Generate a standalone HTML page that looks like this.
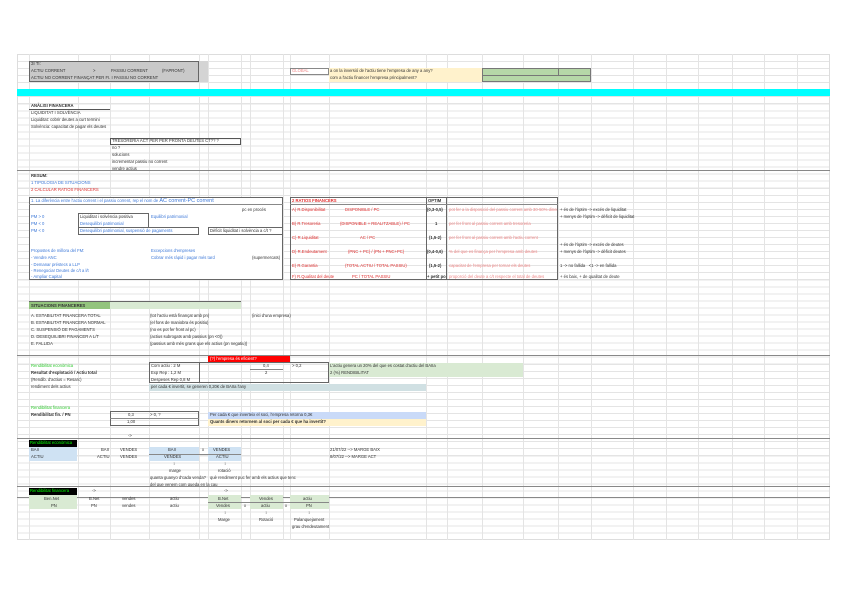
<!DOCTYPE html>
<html><head><meta charset="utf-8"><style>
*{margin:0;padding:0;box-sizing:border-box}
body{width:848px;height:599px;background:#fff;position:relative;overflow:hidden;font-family:"Liberation Sans",sans-serif;font-size:4.2px;color:#333}
.grid{position:absolute;left:17px;top:54px;width:813px;height:486px;border:1px solid #ddd;
background-image:repeating-linear-gradient(to bottom,transparent 0,transparent 6px,#e4e4e4 6px,#e4e4e4 7.04px)}
.v{position:absolute;top:54px;height:486px;width:1px;background:#e4e4e4}
.t{position:absolute;white-space:nowrap;line-height:6px}
.b{position:absolute}
.bd{font-weight:bold}
.blue{color:#3c78d8}.red{color:#e03030}.lred{color:#e88}.grn{color:#3c3}
.h{position:absolute;height:1px;background:#888}
.clip{overflow:hidden;width:108px}
</style></head><body>
<div class="grid"></div>
<div class="v" style="left:29px"></div><div class="v" style="left:78px"></div><div class="v" style="left:110px"></div>
<div class="v" style="left:149px"></div><div class="v" style="left:199px"></div><div class="v" style="left:208px"></div>
<div class="v" style="left:241px"></div><div class="v" style="left:250px"></div><div class="v" style="left:283px"></div>
<div class="v" style="left:290px"></div><div class="v" style="left:329px"></div><div class="v" style="left:426px"></div>
<div class="v" style="left:447px"></div><div class="v" style="left:482px"></div><div class="v" style="left:523px"></div>
<div class="v" style="left:558px"></div><div class="v" style="left:591px"></div><div class="v" style="left:633px"></div>
<div class="v" style="left:666px"></div><div class="v" style="left:698px"></div><div class="v" style="left:732px"></div>
<div class="v" style="left:764px"></div><div class="v" style="left:797px"></div>

<!-- top grey box -->
<div class="b" style="left:199px;top:61px;width:9px;height:21px;background:#d4d4d4"></div>
<div class="b" style="left:29px;top:61px;width:170px;height:21px;background:#c9c9c9;border:1px solid #666"></div>
<div class="t" style="left:31px;top:61px">ЗІ ТІ:</div>
<div class="t" style="left:31px;top:68px">ACTIU CORRENT</div><div class="t" style="left:93px;top:68px">&gt;</div>
<div class="t" style="left:111px;top:68px">PASSIU CORRENT</div><div class="t" style="left:162px;top:68px">(FAPRONT)</div>
<div class="t" style="left:31px;top:75px">ACTIU NO CORRENT FINANÇAT PER FI. I PASSIU NO CORRENT</div>
<div class="b" style="left:290px;top:68px;width:39px;height:7px;border:1px solid #888"></div>
<div class="t lred" style="left:292px;top:68px">GLOBAL</div>
<div class="b" style="left:329px;top:68px;width:153px;height:14px;background:#fff2cc"></div>
<div class="t" style="left:330px;top:68px">a on la inversió de l'actiu tiene l'empresa de any a any?</div>
<div class="t" style="left:330px;top:75px">com a l'actiu financer l'empresa principalment?</div>
<div class="b" style="left:482px;top:68px;width:109px;height:14px;background:#b6d7a8;border:1px solid #777"></div>
<div class="h" style="left:482px;top:75px;width:109px;background:#777"></div>
<div class="b" style="left:558px;top:68px;width:1px;height:7px;background:#777"></div>

<div class="b" style="left:17px;top:89px;width:813px;height:7px;background:#00ffff"></div>

<div class="t bd" style="left:31px;top:103px">ANÀLISI FINANCERA</div>
<div class="h" style="left:29px;top:109px;width:81px;background:#555"></div>
<div class="t" style="left:31px;top:110px">LIQUIDITAT I SOLVÈNCIA</div>
<div class="t" style="left:31px;top:117px">Liquiditat: cobrir deutes a curt termini</div>
<div class="t" style="left:31px;top:124px">Solvència: capacitat de pagar els deutes</div>
<div class="b" style="left:110px;top:138px;width:131px;height:7px;border:1px solid #555"></div>
<div class="t" style="left:112px;top:138px">TRESORERIA ACT PER PER PRONTA DEUTES CT?? ?</div>
<div class="t" style="left:112px;top:145px">no ?</div>
<div class="t" style="left:112px;top:152px">solucions</div>
<div class="t" style="left:112px;top:159px">incrementar passiu no corrent</div>
<div class="t" style="left:112px;top:166px">vendre actius</div>
<div class="h" style="left:17px;top:170px;width:813px"></div>
<div class="t bd" style="left:31px;top:173px">RESUM:</div>
<div class="t blue" style="left:31px;top:180px">1 TIPOLOGIA DE SITUACIONS</div>
<div class="t red" style="left:31px;top:187px">2 CALCULAR RATIOS FINANCERS</div>

<!-- left box -->
<div class="b" style="left:29px;top:197px;width:254px;height:83px;border:1px solid #666;background:#fff"></div>
<div class="h" style="left:29px;top:204px;width:254px"></div>
<div class="t blue" style="left:31px;top:198px">1. La diferència entre l'actiu corrent i el passiu corrent, rep el nom de <span style="font-size:5.5px">AC corrent-PC corrent</span></div>
<div class="t" style="left:242px;top:207px">pc en procés</div>
<div class="t blue" style="left:31px;top:214px">PM &gt; 0</div><div class="t blue" style="left:31px;top:221px">PM &lt; 0</div><div class="t blue" style="left:31px;top:228px">PM &lt; 0</div>
<div class="b" style="left:78px;top:213px;width:71px;height:15px;border:1px solid #666"></div>
<div class="b" style="left:78px;top:227px;width:121px;height:8px;border:1px solid #666"></div>
<div class="b" style="left:208px;top:227px;width:75px;height:8px;border:1px solid #666"></div>
<div class="t" style="left:80px;top:214px">Liquiditat i solvència positiva</div>
<div class="t blue" style="left:151px;top:214px">Equilibri patrimonial</div>
<div class="t blue" style="left:80px;top:221px">Desequilibri patrimonial</div>
<div class="t blue" style="left:80px;top:228px">Desequilibri patrimonial, suspensió de pagaments</div>
<div class="t" style="left:210px;top:228px">Dèficit liquiditat i solvència a c/t ?</div>
<div class="t blue" style="left:31px;top:248px">Propostes de millora del FM:</div>
<div class="t blue" style="left:151px;top:248px">Excepcions d'empreses</div>
<div class="t blue" style="left:31px;top:255px">- Vendre ANC</div>
<div class="t blue" style="left:151px;top:255px">Cobrar més ràpid i pagar més tard</div>
<div class="t" style="left:252px;top:255px">(supermercats)</div>
<div class="t blue" style="left:31px;top:262px">- Demanar préstecs a LLP</div>
<div class="t blue" style="left:31px;top:268px">- Renegociar Deutes de c/t a l/t</div>
<div class="t blue" style="left:31px;top:274px">- Ampliar Capital</div>

<!-- ratios box -->
<div class="b" style="left:290px;top:197px;width:268px;height:83px;border:1px solid #666"></div>
<div class="b" style="left:426px;top:197px;width:21px;height:83px;border-left:1px solid #666;border-right:1px solid #666"></div>
<div class="h" style="left:290px;top:204px;width:268px"></div>
<div class="t red bd" style="left:292px;top:198px">2 RATIOS FINANCERS</div>
<div class="t bd" style="left:428px;top:198px">OPTIM</div>
<div class="t red" style="left:292px;top:207px">A) R.Disponibilitat</div><div class="t red" style="left:345px;top:207px">DISPONIBLE / PC</div><div class="t bd" style="left:427px;top:207px">(0,3-0,5)</div><div class="t lred clip" style="left:449px;top:207px">pot fer a la disposició del passiu corrent amb 30-50% diner</div>
<div class="t red" style="left:292px;top:221px">B) R.Tresoreria</div><div class="t red" style="left:340px;top:221px">(DISPONIBLE + REALITZABLE) / PC</div><div class="t bd" style="left:435px;top:221px">1</div><div class="t lred clip" style="left:449px;top:221px">per fer front al passiu corrent amb tresoreria</div>
<div class="t red" style="left:292px;top:235px">C) R.Liquiditat</div><div class="t red" style="left:360px;top:235px">AC / PC</div><div class="t bd" style="left:429px;top:235px">(1,5-2)</div><div class="t lred clip" style="left:449px;top:235px">per fer front al passiu corrent amb l'actiu corrent</div>
<div class="t red" style="left:292px;top:249px">D) R.Endeutament</div><div class="t red" style="left:348px;top:249px">(PNC + PC) / (PN + PNC+PC)</div><div class="t bd" style="left:427px;top:249px">(0,4-0,6)</div><div class="t lred clip" style="left:449px;top:249px">% del que es finança per l'empresa amb deutes</div>
<div class="t red" style="left:292px;top:263px">E) R.Garantia</div><div class="t red" style="left:345px;top:263px">(TOTAL ACTIU / TOTAL PASSIU)</div><div class="t bd" style="left:429px;top:263px">(1,5-2)</div><div class="t lred clip" style="left:449px;top:263px">capacitat de l'empresa per tornar els deutes</div>
<div class="t red" style="left:292px;top:274px">F) R.Qualitat del deute</div><div class="t red" style="left:352px;top:274px">PC / TOTAL PASSIU</div><div class="t bd" style="left:427px;top:274px;width:19px;overflow:hidden">+ petit pos</div><div class="t lred clip" style="left:449px;top:274px">proporció del deute a c/t respecte el total de deutes</div>
<div class="t" style="left:560px;top:207px">+ és de l'òptim -&gt; excés de liquiditat</div>
<div class="t" style="left:560px;top:214px">+ menys de l'òptim -&gt; dèficit de liquiditat</div>
<div class="t" style="left:560px;top:242px">+ és de l'òptim -&gt; excés de deutes</div>
<div class="t" style="left:560px;top:249px">+ menys de l'òptim -&gt; dèficit deutes</div>
<div class="t" style="left:560px;top:263px">1 -&gt; no fallida &nbsp; &lt;1 -&gt; en fallida</div>
<div class="t" style="left:560px;top:274px">+ és baix, + de qualitat de deute</div>

<!-- situacions -->
<div class="b" style="left:29px;top:302px;width:81px;height:7px;background:#93c47d"></div>
<div class="b" style="left:110px;top:302px;width:131px;height:7px;background:#d9ead3"></div>
<div class="h" style="left:29px;top:301px;width:212px;background:#666"></div>
<div class="t bd" style="left:31px;top:303px">SITUACIONS FINANCERES</div>
<div class="t" style="left:31px;top:313px">A. ESTABILITAT FINANCERA TOTAL</div><div class="t" style="left:150px;top:313px">(tot l'actiu està finançat amb pn)</div><div class="t" style="left:252px;top:313px">(inici d'una empresa)</div>
<div class="t" style="left:31px;top:320px">B. ESTABILITAT FINANCERA NORMAL</div><div class="t" style="left:150px;top:320px">(el fons de maniobra és positiu)</div>
<div class="t" style="left:31px;top:327px">C. SUSPENSIÓ DE PAGAMENTS</div><div class="t" style="left:150px;top:327px">(no es pot fer front al pc)</div>
<div class="t" style="left:31px;top:334px">D. DESEQUILIBRI FINANCER A L/T</div><div class="t" style="left:150px;top:334px">(actius subrogats amb passius (pn &lt;0))</div>
<div class="t" style="left:31px;top:341px">E. FALLIDA</div><div class="t" style="left:150px;top:341px">(passius amb més grans que els actius (pn negatiu))</div>

<div class="h" style="left:17px;top:355px;width:813px"></div>
<div class="b" style="left:208px;top:356px;width:82px;height:7px;background:#f00"></div>
<div class="t" style="left:210px;top:356px;color:#fff">(?) l'empresa és eficient?</div>
<div class="t grn" style="left:31px;top:363px">Rendibilitat econòmica</div>
<div class="t bd" style="left:31px;top:370px">Resultat d'explotació / Actiu total</div>
<div class="t" style="left:31px;top:377px">(Rendib. d'actius = Resarc)</div>
<div class="t" style="left:31px;top:384px">rendiment dels actius</div>
<div class="b" style="left:329px;top:363px;width:194px;height:14px;background:#d9ead3"></div>
<div class="b" style="left:149px;top:362px;width:180px;height:21px;border:1px solid #666"></div>
<div class="b" style="left:199px;top:362px;width:1px;height:21px;background:#666"></div>
<div class="t" style="left:151px;top:363px">Com actiu : 2 M</div>
<div class="t" style="left:151px;top:370px">Exp Rep : 1,2 M</div>
<div class="t" style="left:151px;top:377px">Despeses Rep 0,8 M</div>
<div class="t" style="left:263px;top:363px">0,4</div><div class="h" style="left:250px;top:369px;width:33px"></div>
<div class="t" style="left:265px;top:370px">2</div><div class="t" style="left:292px;top:363px">&gt; 0,2</div>
<div class="t" style="left:330px;top:363px">L'actiu genera un 20% del que es costat d'actiu del BAIIa</div>
<div class="t" style="left:330px;top:370px">2 (%) RENDIBILITAT</div>
<div class="b" style="left:149px;top:384px;width:277px;height:7px;background:#d0e0e3"></div>
<div class="t" style="left:151px;top:384px">per cada € invertit, se generen 0,20€ de BAIIa l'any</div>

<div class="t grn" style="left:31px;top:405px">Rendibilitat financera</div>
<div class="t bd" style="left:31px;top:412px">Rendibilitat fin. / PN</div>
<div class="b" style="left:110px;top:411px;width:89px;height:15px;border:1px solid #666"></div>
<div class="h" style="left:110px;top:418px;width:89px"></div>
<div class="t" style="left:128px;top:412px">0,3</div><div class="t" style="left:127px;top:419px">1,00</div>
<div class="t" style="left:150px;top:412px">&gt; 0, ?</div>
<div class="b" style="left:208px;top:412px;width:218px;height:7px;background:#c9daf8"></div>
<div class="b" style="left:208px;top:419px;width:218px;height:7px;background:#fff2cc"></div>
<div class="t" style="left:210px;top:412px">Per cada € que inverteix el soci, l'empresa retorna 0,3€</div>
<div class="t bd" style="left:210px;top:419px">Quants diners retornem al soci per cada € que ha invertit?</div>

<div class="h" style="left:17px;top:438px;width:813px"></div>
<div class="b" style="left:29px;top:440px;width:48px;height:7px;background:#000"></div>
<div class="t" style="left:30px;top:440px;color:#0f0">Rendibilitat econòmica</div>
<div class="t" style="left:128px;top:433px">-&gt;</div>
<div class="b" style="left:29px;top:447px;width:48px;height:14px;background:#cfe2f3"></div>
<div class="b" style="left:149px;top:447px;width:50px;height:14px;background:#cfe2f3"></div>
<div class="b" style="left:208px;top:447px;width:33px;height:14px;background:#cfe2f3"></div>
<div class="h" style="left:149px;top:454px;width:92px"></div>
<div class="t" style="left:31px;top:447px">BAII</div><div class="t" style="left:101px;top:447px">BAII</div><div class="t" style="left:120px;top:447px">VENDES</div>
<div class="t" style="left:168px;top:447px">BAII</div><div class="t" style="left:202px;top:447px">x</div><div class="t" style="left:213px;top:447px">VENDES</div>
<div class="t" style="left:330px;top:447px">21/07/22 --&gt; MARGE BAIX</div>
<div class="t" style="left:31px;top:454px">ACTIU</div><div class="t" style="left:97px;top:454px">ACTIU</div><div class="t" style="left:120px;top:454px">VENDES</div>
<div class="t" style="left:164px;top:454px">VENDES</div><div class="t" style="left:216px;top:454px">ACTIU</div>
<div class="t" style="left:330px;top:454px">8/07/22 --&gt; MARGE ACT</div>
<div class="t" style="left:173px;top:461px">↕</div><div class="t" style="left:224px;top:461px">↕</div>
<div class="t" style="left:169px;top:468px">marge</div><div class="t" style="left:218px;top:468px">rotació</div>
<div class="t" style="left:150px;top:475px">quanta guanyo d'cada venda?</div>
<div class="t" style="left:210px;top:475px">què rendiment puc fer amb els actius que tenc</div>
<div class="t" style="left:150px;top:482px">del que venem com queda en la cau</div>

<div class="h" style="left:17px;top:486px;width:813px"></div>
<div class="b" style="left:29px;top:488px;width:48px;height:7px;background:#000"></div>
<div class="t" style="left:30px;top:488px;color:#0f0">Rendibilitat financera</div>
<div class="t" style="left:92px;top:488px">-&gt;</div><div class="t" style="left:224px;top:488px">-&gt;</div>
<div class="h" style="left:17px;top:497px;width:813px"></div>
<div class="b" style="left:29px;top:495px;width:48px;height:14px;background:#d9ead3"></div>
<div class="b" style="left:208px;top:495px;width:33px;height:14px;background:#d9ead3"></div>
<div class="b" style="left:250px;top:495px;width:33px;height:14px;background:#d9ead3"></div>
<div class="b" style="left:290px;top:495px;width:39px;height:14px;background:#d9ead3"></div>
<div class="h" style="left:208px;top:502px;width:121px"></div>
<div class="t" style="left:44px;top:496px">Ben.Net</div><div class="t" style="left:89px;top:496px">B.Net</div><div class="t" style="left:122px;top:496px">vendes</div><div class="t" style="left:170px;top:496px">actiu</div>
<div class="t" style="left:218px;top:496px">B.Net</div><div class="t" style="left:259px;top:496px">Vendes</div><div class="t" style="left:303px;top:496px">actiu</div>
<div class="t" style="left:51px;top:503px">PN</div><div class="t" style="left:91px;top:503px">PN</div><div class="t" style="left:122px;top:503px">vendes</div><div class="t" style="left:170px;top:503px">actiu</div>
<div class="t" style="left:216px;top:503px">Vendes</div><div class="t" style="left:244px;top:503px">x</div><div class="t" style="left:261px;top:503px">actiu</div><div class="t" style="left:285px;top:503px">x</div><div class="t" style="left:306px;top:503px">PN</div>
<div class="t" style="left:224px;top:510px">↕</div><div class="t" style="left:265px;top:510px">↕</div><div class="t" style="left:308px;top:510px">↕</div>
<div class="t" style="left:218px;top:517px">Marge</div><div class="t" style="left:259px;top:517px">Rotació</div><div class="t" style="left:294px;top:517px">Palanquejament</div>
<div class="t" style="left:292px;top:524px">grau d'endeutament</div>
</body></html>
